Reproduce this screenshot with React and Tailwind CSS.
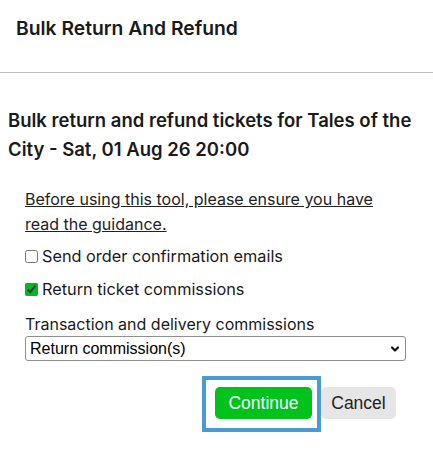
import { useState } from "react";

export default function App() {
  const [sendEmails, setSendEmails] = useState(false);
  const [returnComm, setReturnComm] = useState(true);

  return (
    <div className="min-h-screen bg-white text-[#1a1a1a]" style={{ fontFamily: "Inter, 'Noto Sans', sans-serif" }}>
      {/* Header */}
      <div className="h-[73px] border-b border-[#bdbdbd] px-4 pt-[16px]">
        <h2 className="text-[19.3px] font-semibold leading-6">Bulk Return And Refund</h2>
      </div>

      {/* Body */}
      <div className="px-2 pt-[33px]">
        <h1 className="text-[18.5px] font-semibold leading-[29px]">
          Bulk return and refund tickets for Tales of the City - Sat, 01 Aug 26 20:00
        </h1>

        <div className="pl-[17px] pr-[19px] pt-[23px] text-base">
          <a href="#" className="block underline leading-[25px] text-[#222]">
            Before using this tool, please ensure you have read the guidance.
          </a>

          <label className="mt-[7px] flex items-center gap-[4px] leading-6">
            <input
              type="checkbox"
              checked={sendEmails}
              onChange={(e) => setSendEmails(e.target.checked)}
              className="m-0 h-[13px] w-[13px] accent-[#00b822]"
            />
            <span className="text-[16.3px]">Send order confirmation emails</span>
          </label>

          <label className="mt-[9px] flex items-center gap-[4px] leading-6">
            <input
              type="checkbox"
              checked={returnComm}
              onChange={(e) => setReturnComm(e.target.checked)}
              className="m-0 h-[13px] w-[13px] accent-[#00b822]"
            />
            <span className="text-[16.3px]">Return ticket commissions</span>
          </label>

          <div className="mt-[11px] leading-6">Transaction and delivery commissions</div>
          <div className="relative">
            <select
              defaultValue="return"
              className="block w-full h-[25px] appearance-none border border-[#8f8f8f] rounded-[3px] bg-white pl-[4px] pr-6 text-base leading-[23px] text-black"
              style={{ fontFamily: "'Liberation Sans', Arial, sans-serif" }}
            >
              <option value="return">Return commission(s)</option>
              <option value="keep">Keep commission(s)</option>
            </select>
            <svg className="pointer-events-none absolute right-[6px] top-1/2 -translate-y-1/2 w-[10px] h-[10px]" viewBox="0 0 10 10" fill="none" stroke="#111" strokeWidth="2.2" strokeLinecap="round" strokeLinejoin="round">
              <path d="M2 3.5 L5 6.5 L8 3.5" />
            </svg>
          </div>

          <div className="mt-[15px] flex justify-end pr-[10px]" style={{ fontFamily: "'Liberation Sans', Arial, sans-serif" }}>
            <div className="border-4 border-[#4a9bd3] pl-[9px] pr-[5px] pt-[7px] pb-[9px]">
              <button className="h-[32px] w-[97px] rounded-[5px] bg-[#00c21c] text-[17.5px] text-white">Continue</button>
            </div>
            <button className="mt-[11px] h-[32px] w-[75px] rounded-[5px] bg-[#e6e6e6] text-[17.5px] text-[#222]">Cancel</button>
          </div>
        </div>
      </div>
    </div>
  );
}
